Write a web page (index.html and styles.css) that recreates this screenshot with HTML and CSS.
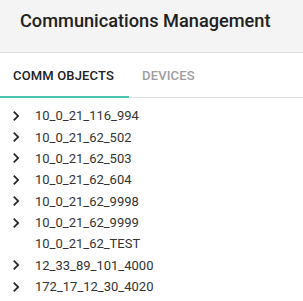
FILE: index.html
```html
<!DOCTYPE html>
<html lang="en">
<head>
<meta charset="utf-8">
<title>Communications Management</title>
<link rel="stylesheet" href="styles.css">
</head>
<body>
<header class="page-header">
  <h1 class="page-title">Communications Management</h1>
</header>
<nav class="tabs">
  <div class="tab tab-active">COMM OBJECTS</div>
  <div class="tab">DEVICES</div>
</nav>
<ul class="tree">
  <li class="node"><svg class="chevron" viewBox="0 0 24 24"><path d="M10 6L8.59 7.41 13.17 12l-4.58 4.59L10 18l6-6z"/></svg><span class="label">10_0_21_116_994</span></li>
  <li class="node"><svg class="chevron" viewBox="0 0 24 24"><path d="M10 6L8.59 7.41 13.17 12l-4.58 4.59L10 18l6-6z"/></svg><span class="label">10_0_21_62_502</span></li>
  <li class="node"><svg class="chevron" viewBox="0 0 24 24"><path d="M10 6L8.59 7.41 13.17 12l-4.58 4.59L10 18l6-6z"/></svg><span class="label">10_0_21_62_503</span></li>
  <li class="node"><svg class="chevron" viewBox="0 0 24 24"><path d="M10 6L8.59 7.41 13.17 12l-4.58 4.59L10 18l6-6z"/></svg><span class="label">10_0_21_62_604</span></li>
  <li class="node"><svg class="chevron" viewBox="0 0 24 24"><path d="M10 6L8.59 7.41 13.17 12l-4.58 4.59L10 18l6-6z"/></svg><span class="label">10_0_21_62_9998</span></li>
  <li class="node"><svg class="chevron" viewBox="0 0 24 24"><path d="M10 6L8.59 7.41 13.17 12l-4.58 4.59L10 18l6-6z"/></svg><span class="label">10_0_21_62_9999</span></li>
  <li class="node"><span class="chevron-space"></span><span class="label">10_0_21_62_TEST</span></li>
  <li class="node"><svg class="chevron" viewBox="0 0 24 24"><path d="M10 6L8.59 7.41 13.17 12l-4.58 4.59L10 18l6-6z"/></svg><span class="label">12_33_89_101_4000</span></li>
  <li class="node"><svg class="chevron" viewBox="0 0 24 24"><path d="M10 6L8.59 7.41 13.17 12l-4.58 4.59L10 18l6-6z"/></svg><span class="label">172_17_12_30_4020</span></li>
</ul>
</body>
</html>
```
FILE: styles.css
```css
html, body {
  margin: 0;
  padding: 0;
  background: #ffffff;
  font-family: Roboto, "Liberation Sans", Arial, sans-serif;
}

.page-header {
  box-sizing: border-box;
  height: 53px;
  padding: 9px 20px 0;
  background: #f4f4f4;
  border-bottom: 1px solid #dddddd;
}

.page-title {
  margin: 0;
  font-size: 18.2px;
  line-height: 24px;
  font-weight: 500;
  color: #212121;
}

.tabs {
  display: flex;
  height: 44px;
  border-bottom: 1px solid #e0e0e0;
}

.tab {
  box-sizing: border-box;
  display: flex;
  align-items: center;
  padding: 0 14px 0 13px;
  font-size: 13px;
  font-weight: 500;
  letter-spacing: 0.15px;
  color: #9e9e9e;
}

.tab-active {
  width: 129px;
  color: #212121;
  border-bottom: 2px solid #4ac6b0;
  margin-bottom: -1px;
  padding-top: 1px;
}

.tree {
  list-style: none;
  margin: 0;
  padding: 7px 0 0;
}

.node {
  display: flex;
  align-items: center;
  height: 21.375px;
  padding-left: 6px;
  font-size: 13px;
  color: #333333;
}

.chevron {
  width: 20px;
  height: 20px;
  fill: #222222;
  flex: none;
}

.chevron-space {
  width: 20px;
  flex: none;
}

.label {
  margin-left: 9px;
}
```
